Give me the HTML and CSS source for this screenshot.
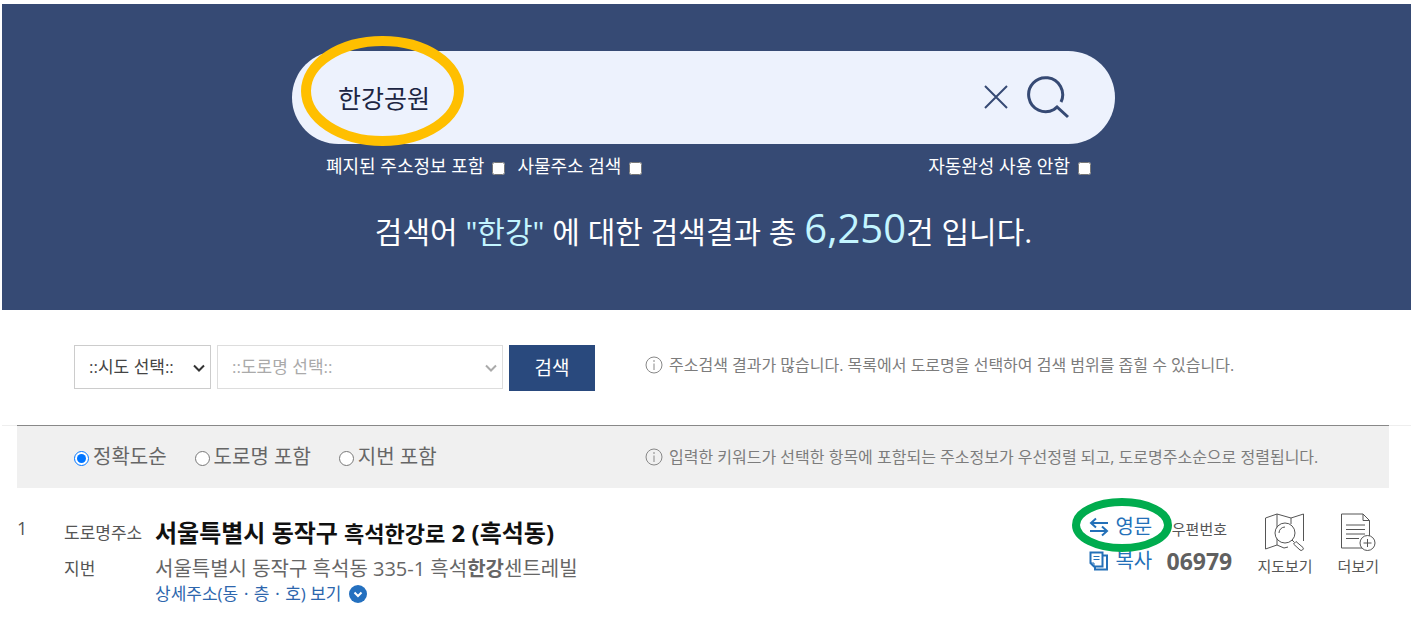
FILE: index.html
```html
<!DOCTYPE html>
<html lang="ko">
  <head>
    <meta charset="utf-8">
    <title>주소 검색결과</title>
    <link rel="stylesheet" href="styles.css">
  </head>
  <body>
    <header class="hero">
      <form class="search">
        <div class="search-box">
          <input type="text" class="search-input" aria-label="검색어" value="한강공원">
          <button type="button" class="icon-btn" aria-label="지우기">
            <svg width="26" height="26" viewBox="0 0 26 26"><path d="M2 2L24 24M24 2L2 24"/></svg>
          </button>
          <button type="submit" class="icon-btn find" aria-label="검색">
            <svg width="44" height="44" viewBox="0 0 44 44"><path d="M35 27A17 17 0 1 0 28 34.500L31 32L42 42"/></svg>
          </button>
          <svg class="mark mark-keyword" width="163" height="110" viewBox="0 0 163 110"><ellipse cx="81.500" cy="55" rx="76.500" ry="50"/></svg>
        </div>
        <div class="options">
          <label>폐지된 주소정보 포함 <input type="checkbox"></label>
          <label>사물주소 검색 <input type="checkbox"></label>
          <label class="auto">자동완성 사용 안함 <input type="checkbox"></label>
        </div>
      </form>
      <p class="summary">검색어 <em>"한강"</em> 에 대한 검색결과 총 <strong>6,250</strong>건 입니다.</p>
    </header>

    <form class="filter">
      <div class="selects">
        <div class="select sido">
          <select aria-label="시도"><option>::시도 선택::</option></select>
          <svg width="12" height="8" viewBox="0 0 12 8"><path d="M1 1.500L6 6.500L11 1.500"/></svg>
        </div>
        <div class="select road">
          <select aria-label="도로명" disabled><option>::도로명 선택::</option></select>
          <svg width="12" height="8" viewBox="0 0 12 8"><path d="M1 1.500L6 6.500L11 1.500"/></svg>
        </div>
        <button type="submit" class="submit">검색</button>
      </div>
      <p class="info">
        <svg width="18" height="18" viewBox="0 0 18 18"><circle cx="9" cy="9" r="8"/><path d="M9 4V6M9 7.500V14"/></svg>
        주소검색 결과가 많습니다. 목록에서 도로명을 선택하여 검색 범위를 좁힐 수 있습니다.
      </p>
    </form>

    <main class="list">
      <div class="sort">
        <div class="sort-options">
          <label><input type="radio" name="sort" checked>정확도순</label>
          <label><input type="radio" name="sort">도로명 포함</label>
          <label><input type="radio" name="sort">지번 포함</label>
        </div>
        <p class="info">
          <svg width="18" height="18" viewBox="0 0 18 18"><circle cx="9" cy="9" r="8"/><path d="M9 4V6M9 7.500V14"/></svg>
          입력한 키워드가 선택한 항목에 포함되는 주소정보가 우선정렬 되고, 도로명주소순으로 정렬됩니다.
        </p>
      </div>

      <article class="result">
        <span class="no">1</span>
        <dl class="address">
          <dt>도로명주소</dt>
          <dd class="road-addr">서울특별시 동작구 <span class="hit">흑석한강로</span> 2 (흑석동)</dd>
          <dt>지번</dt>
          <dd class="jibun">서울특별시 동작구 흑석동 335-1 흑석<b>한강</b>센트레빌</dd>
          <dd class="detail">
            <a href="#">상세주소(동ㆍ층ㆍ호) 보기
              <svg width="18" height="18" viewBox="0 0 18 18"><circle cx="9" cy="9" r="9"/><path d="M5.500 7.500L9 11L12.500 7.500"/></svg>
            </a>
          </dd>
        </dl>
        <div class="tools">
          <a href="#">
            <svg width="20" height="20" viewBox="0 0 20 20"><path d="M19 6H2M7 1.500L2 6L7 10.500M1 14H18M13 9.500L18 14L13 18.500"/></svg>
            영문
          </a>
          <a href="#">
            <svg width="20" height="20" viewBox="0 0 20 20"><path d="M1.500 1.500H13.500V15.500H5L1.500 12ZM13.500 4.500H18V18.500H6V15.500"/><path class="thin" d="M4.500 5.500H10.500M4.500 8.500H10.500M1.500 12H5V15.500"/></svg>
            복사
          </a>
          <svg class="mark mark-english" width="100" height="54" viewBox="0 0 100 54"><ellipse cx="50" cy="27" rx="46" ry="23"/></svg>
        </div>
        <div class="zip">
          <span>우편번호</span>
          <strong>06979</strong>
        </div>
        <a href="#" class="action">
          <svg width="42" height="40" viewBox="0 0 42 40">
            <path d="M20 36L13 33L1.500 37V6L13 2L27 6L39.500 2V29M13 2V33M27 6V12M20 36L24 35"/>
            <circle class="lens" cx="21" cy="21" r="10"/>
            <path d="M15 21A6 6 0 0 1 21 15M28 28L30.500 30.500"/>
            <path class="lens" d="M29.500 32L32 29.500L39 35.500Q40 37 38.500 38Q37 39 36 38Z"/>
          </svg>
          지도보기
        </a>
        <a href="#" class="action">
          <svg width="36" height="40" viewBox="0 0 36 40">
            <path d="M24 36H1.500V2H23L29.500 8.500V25M23 2V8.500H29.500M6 13H25M6 17.500H25M6 22H25M6 26.500H19"/>
            <circle class="lens" cx="27.500" cy="31" r="7.500"/>
            <path d="M27.500 27V35M23.500 31H31.500"/>
          </svg>
          더보기
        </a>
      </article>
    </main>
  </body>
</html>
```
FILE: styles.css
```css
* {
  margin: 0;
  padding: 0;
  box-sizing: border-box;
}

body {
  min-height: 100vh;
  padding: 4px 0 0 2px;
  background: #fff;
  color: #555;
  font-family: "Open Sans", "Noto Sans CJK KR", sans-serif;
  font-size: 17px;
  line-height: 24px;
}

input,
select,
button {
  font: inherit;
  color: inherit;
}

a {
  color: inherit;
  text-decoration: none;
}

svg {
  flex: none;
  fill: none;
  stroke: currentColor;
}

/* search header */

.hero {
  padding: 47px 6px 54px 0;
  background: #364a74;
  color: #fff;
}

.search {
  width: 100%;
  max-width: 823px;
  margin: 0 auto;
}

.search-box {
  position: relative;
  display: flex;
  align-items: center;
  gap: 17px;
  height: 93px;
  padding: 0 45px 2px 46px;
  border-radius: 47px;
  background: #edf2fd;
  color: #364a74;
}

.search-input {
  flex: 1;
  min-width: 0;
  height: 40px;
  border: 0;
  outline: 0;
  background: none;
  color: #1c2542;
  font-size: 25px;
}

.icon-btn {
  display: flex;
  border: 0;
  background: none;
  stroke-width: 2;
}

.find {
  stroke-width: 3;
}

.mark {
  position: absolute;
  z-index: 1;
  pointer-events: none;
}

.mark-keyword {
  left: 9px;
  top: -15px;
  stroke: #ffbf00;
  stroke-width: 10;
}

.options {
  display: flex;
  gap: 12px;
  margin-top: 10px;
  padding: 0 24px 0 34px;
  font-size: 18px;
}

.options label {
  display: flex;
  align-items: center;
  gap: 8px;
}

.options .auto {
  margin-left: auto;
}

.options input {
  width: 13px;
  height: 13px;
  margin-top: 4px;
}

.summary {
  margin-top: 30px;
  font-size: 30px;
  line-height: 48px;
  text-align: center;
}

.summary em,
.summary strong {
  color: #c3f5ff;
  font-style: normal;
  font-weight: normal;
}

.summary strong {
  font-size: 40px;
  line-height: 40px;
}

/* region filter */

.filter,
.sort {
  display: flex;
}

.filter {
  padding: 35px 22px 34px 72px;
  border-bottom: 1px solid #eee;
}

.selects {
  display: flex;
  gap: 6px;
  width: 571px;
}

.select {
  position: relative;
  height: 44px;
}

.select select {
  width: 100%;
  height: 100%;
  padding: 0 14px;
  border: 1px solid #ccc;
  border-radius: 0;
  background: #fff;
  color: #444;
  opacity: 1;
  appearance: none;
}

.select svg {
  position: absolute;
  right: 6px;
  top: 19px;
  stroke: #333;
  stroke-width: 2;
}

.sido {
  width: 137px;
}

.road {
  width: 286px;
}

.road select {
  border-color: #ddd;
  color: #aaa;
}

.road svg {
  stroke: #aaa;
}

.submit {
  width: 86px;
  height: 46px;
  border: 0;
  background: #29497d;
  color: #fff;
  font-size: 19px;
}

.info {
  display: flex;
  align-items: center;
  gap: 6px;
  height: 40px;
  color: #7c7c7c;
  font-size: 16px;
}

.info svg {
  stroke: #888;
}

/* result list */

.list {
  padding: 0 22px 0 15px;
}

.sort {
  align-items: center;
  height: 63px;
  margin-top: -1px;
  padding-left: 57px;
  border-top: 1px solid #888;
  background: #f0f0f0;
}

.sort-options {
  display: flex;
  gap: 28px;
  width: 571px;
  color: #666;
  font-size: 20px;
}

.sort-options label {
  display: flex;
  align-items: center;
  gap: 4px;
}

.sort-options input {
  width: 15px;
  height: 15px;
  margin-top: 3px;
}

.result {
  display: flex;
  padding: 20px 0 16px;
}

.no {
  width: 47px;
  margin-top: 8px;
  font-size: 18px;
}

.address {
  display: grid;
  grid-template-columns: 91px 1fr;
  flex: 1;
  align-content: start;
  padding-top: 7px;
}

.address dt {
  line-height: 36px;
}

.road-addr {
  color: #111;
  font-size: 24px;
  font-weight: bold;
  line-height: 36px;
}

.hit {
  font-size: 22px;
}

.jibun {
  color: #666;
  font-size: 20px;
  line-height: 36px;
}

.detail {
  grid-column: 2;
  line-height: 14px;
  color: #2d66ad;
}

.detail a {
  display: flex;
  align-items: center;
  gap: 8px;
  height: 14px;
}

.detail svg {
  fill: #2470bf;
  stroke: none;
}

.detail path {
  fill: none;
  stroke: #fff;
  stroke-width: 2;
}

.tools {
  position: relative;
  width: 77px;
  color: #2470b8;
  font-size: 20px;
}

.tools a {
  display: flex;
  align-items: center;
  gap: 6px;
  height: 34px;
  margin-top: 2px;
  stroke-width: 2;
}

.tools a + a {
  margin-top: 0;
}

.thin {
  stroke-width: 1;
}

.mark-english {
  left: -17px;
  top: -10px;
  stroke: #00ac4e;
  stroke-width: 8;
}

.zip {
  display: flex;
  flex-direction: column;
  align-items: center;
  width: 66px;
  padding-top: 9px;
  font-size: 15px;
}

.zip strong {
  margin-top: 8px;
  color: #606060;
  font-size: 23px;
}

.action {
  display: flex;
  flex-direction: column;
  align-items: center;
  gap: 2px;
  margin: 4px 0 0 25px;
  font-size: 15px;
}

.action + .action {
  margin-right: 10px;
}

.lens {
  fill: #fff;
}
```
